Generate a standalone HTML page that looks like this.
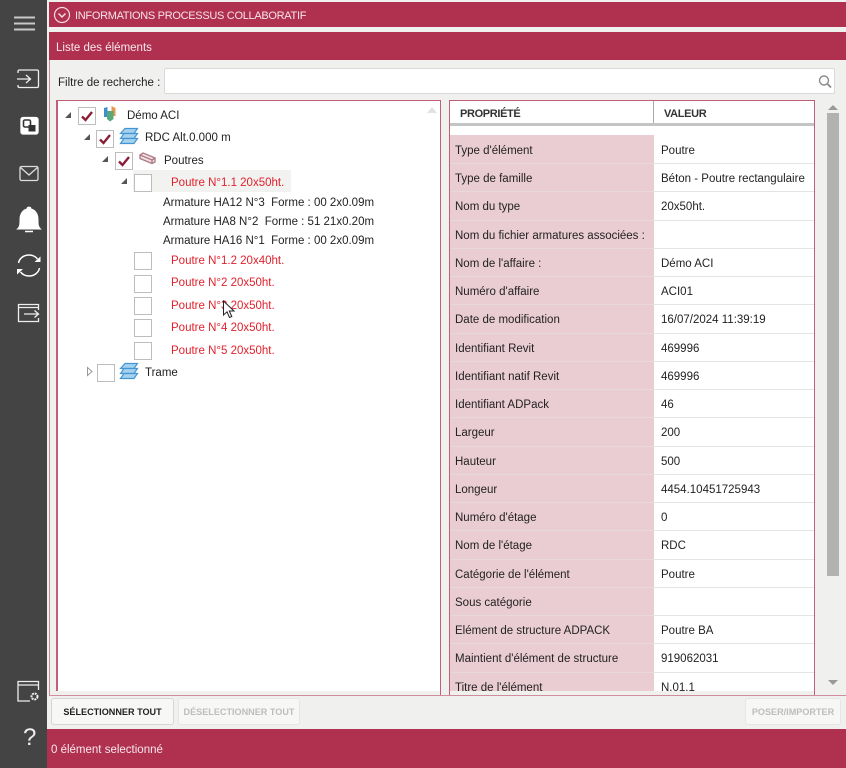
<!DOCTYPE html>
<html><head><meta charset="utf-8">
<style>
*{box-sizing:border-box}
html,body{margin:0;padding:0}
body{width:846px;height:768px;position:relative;overflow:hidden;background:#f0f0ee;font-family:"Liberation Sans",sans-serif;font-size:11.5px;color:#222}
.a{position:absolute}
.t{position:absolute;white-space:nowrap;line-height:16px;height:16px}
.cb{position:absolute;width:18px;height:18px;background:#fff;border:1px solid #bdbdbd}
.r{color:#e2212c}
.exp{position:absolute;width:0;height:0;border-left:6px solid transparent;border-bottom:6px solid #555}
.row{position:absolute;left:450px;width:364px;height:30px;background:#fff;border-top:1px solid #e4e4e4}
.row .p{position:absolute;left:0;top:-1px;width:204px;height:31px;background:#eaccd3;border-top:1px solid #e6d8db;padding:7px 0 0 5px;white-space:nowrap;line-height:16px}
.row .v{position:absolute;left:211px;top:7px;white-space:nowrap;line-height:16px}
.first,.first .p{border-top-color:transparent}
.btn{position:absolute;top:698px;height:27px;border-radius:3px;font-size:9.1px;font-weight:bold;text-align:center;line-height:27px;white-space:nowrap}
svg{position:absolute;overflow:visible}
</style></head><body>

<div class="a" style="left:0;top:0;width:47px;height:768px;background:#444"></div>

<!-- sidebar icons -->
<svg style="left:0;top:0" width="47" height="768" fill="none" stroke="#eee" stroke-width="1.3">
<path d="M14 17.500H35M14 23.500H35M14 29.500H35" stroke="#c8c8c8" stroke-width="2"/>
<path d="M18 73V71.500Q18 70 19.500 70H37Q38.500 70 38.500 71.500V86Q38.500 87.500 37 87.500H19.500Q18 87.500 18 86V85M17 79H30M26 75l4.500 4-4.500 4"/>
<rect x="21" y="117.500" width="17" height="16.500" rx="2" fill="#fff" stroke="#fff"/>
<rect x="23.500" y="120" width="7" height="7" rx="1.500" fill="none" stroke="#333" stroke-width="1.600"/>
<rect x="28.500" y="125" width="7" height="6.500" fill="#333" stroke="none"/>
<rect x="20" y="166.500" width="18" height="14" rx="1.500" stroke="#ddd"/>
<path d="M20.500 167.500L29 175L37.500 167.500" stroke="#ddd"/>
<path d="M17.500 229c2.500-2 2.500-5 2.500-9.500c0-6 3-9.500 7-10.500c0-2.500 4-2.500 4 0c4 1 7 4.500 7 10.500c0 4.500 0 7.500 2.500 9.500z" fill="#fff" stroke="#fff" stroke-width="1"/>
<path d="M25 231.500h8" stroke="#fff" stroke-width="1.500"/>
<path d="M18.500 263c1-5 5.500-8 10.500-8c3.500 0 6.500 1.500 8.500 4M39.500 268c-1 5-5.500 8-10.500 8c-3.500 0-6.500-1.500-8.500-4" stroke="#fff" stroke-width="1.500"/>
<path d="M40.500 256.500v5.500h-6zM17 274.500V269h6z" fill="#fff" stroke="none"/>
<path d="M38.500 310V304.500H18.500V321.500H38.500V318M18.500 307.500H38.500M24 314H38M34.500 310.500L38.500 314L34.500 317.500" stroke-width="1.300"/>
<path d="M18 683.500V681.500H38.500V690M18 683.500V701H30M18 685H38.500" stroke-width="1.300"/>
<circle cx="34.500" cy="696.500" r="3" stroke-width="2" stroke-dasharray="2 .8"/>
</svg>
<div class="t" style="left:23px;top:724px;width:20px;height:28px;font-size:24px;line-height:28px;color:#eee">?</div>

<!-- top bar -->
<div class="a" style="left:49px;top:2px;width:797px;height:25px;background:#b0304f"></div>
<svg style="left:0;top:0" width="80" height="30" fill="none" stroke="#f4dde3" stroke-width="1.200"><circle cx="62" cy="15" r="7.500"/><path d="M58.500 13.500L62 17L65.500 13.500" stroke-width="1.500"/></svg>
<div class="t" style="left:75px;top:8px;color:#f6e4e9;font-size:11px;letter-spacing:-.3px">INFORMATIONS PROCESSUS COLLABORATIF</div>

<!-- outer panel lines -->
<div class="a" style="left:49px;top:60px;width:1px;height:636px;background:#c98898"></div>
<div class="a" style="left:49px;top:695px;width:797px;height:1px;background:#cf8d9e"></div>

<!-- list header -->
<div class="a" style="left:49px;top:32px;width:797px;height:28px;background:#b0304f"></div>
<div class="t" style="left:56px;top:40px;color:#f8e8ec">Liste des éléments</div>

<div class="t" style="left:58px;top:75px;color:#222">Filtre de recherche :</div>
<div class="a" style="left:164px;top:68px;width:671px;height:26px;background:#fff;border:1px solid #d9d9d9;border-radius:2px"></div>
<svg style="left:817px;top:74px" width="15" height="15" fill="none" stroke="#8c8c8c" stroke-width="1.400"><circle cx="7" cy="6.500" r="4.500"/><path d="M10.500 10L14 13.500" stroke-width="1.800"/></svg>

<!-- tree panel -->
<div class="a" style="left:56px;top:100px;width:385px;height:591px;background:#fff;border:1px solid #bf5f78;border-left-width:2px;border-bottom:0"></div>
<div class="a" style="left:440px;top:691px;width:1px;height:4px;background:#bf5f78"></div>
<div class="exp" style="left:65px;top:112px"></div>
<div class="cb" style="left:78px;top:107px"></div>
<svg style="left:78px;top:107px" width="18" height="18" fill="none" stroke="#8a1e37" stroke-width="2.400"><path d="M4 9.500L7.500 13L14 5"/></svg>
<svg style="left:104px;top:106px" width="12" height="16"><path d="M0 2L3.500 1V11H0z" fill="#3f8fce"/><path d="M7.500 0L11.500 2V10H7.500z" fill="#e39a4f"/><path d="M3 5h6.500v8L6 15.500L3 13z" fill="#58a87a"/></svg>
<div class="t" style="left:127px;top:108px">Démo ACI</div>

<div class="exp" style="left:84px;top:134px"></div>
<div class="cb" style="left:96px;top:130px"></div>
<svg style="left:96px;top:130px" width="18" height="18" fill="none" stroke="#8a1e37" stroke-width="2.400"><path d="M4 9.500L7.500 13L14 5"/></svg>
<svg style="left:119px;top:127px" width="20" height="18" fill="#a5d2ee" stroke="#4495d2" stroke-width="1.200"><path d="M6 1.500H18.500L15 6.500H1.500z"/><path d="M5 6.500H18.500L15 11.500H1.500z"/><path d="M5 11.500H18.500L15 16.500H1.500z"/></svg>
<div class="t" style="left:145px;top:130px">RDC Alt.0.000 m</div>

<div class="exp" style="left:102px;top:156px"></div>
<div class="cb" style="left:115px;top:152px"></div>
<svg style="left:115px;top:152px" width="18" height="18" fill="none" stroke="#8a1e37" stroke-width="2.400"><path d="M4 9.500L7.500 13L14 5"/></svg>
<svg style="left:139px;top:152px" width="17" height="13" stroke="#ad7c88" stroke-width="1.400"><path d="M1 3L4 1L16 6V10L13 11.500L1 6.500z" fill="#f3e4e6"/><path d="M1 3L13 8V11.500M13 8L16 6" fill="none"/></svg>
<div class="t" style="left:164px;top:153px">Poutres</div>

<div class="a" style="left:133px;top:170px;width:158px;height:22px;background:#f2f2f0"></div>
<div class="exp" style="left:121px;top:178px"></div>
<div class="cb" style="left:134px;top:174px"></div>
<div class="t r" style="left:171px;top:175px">Poutre N°1.1 20x50ht.</div>

<div class="t" style="left:163px;top:195px">Armature HA12 N°3&nbsp; Forme : 00 2x0.09m</div>
<div class="t" style="left:163px;top:214px">Armature HA8 N°2&nbsp; Forme : 51 21x0.20m</div>
<div class="t" style="left:163px;top:233px">Armature HA16 N°1&nbsp; Forme : 00 2x0.09m</div>

<div class="cb" style="left:134px;top:252px"></div>
<div class="t r" style="left:171px;top:253px">Poutre N°1.2 20x40ht.</div>
<div class="cb" style="left:134px;top:275px"></div>
<div class="t r" style="left:171px;top:275px">Poutre N°2 20x50ht.</div>
<div class="cb" style="left:134px;top:297px"></div>
<div class="t r" style="left:171px;top:298px">Poutre N°3 20x50ht.</div>
<div class="cb" style="left:134px;top:319px"></div>
<div class="t r" style="left:171px;top:320px">Poutre N°4 20x50ht.</div>
<div class="cb" style="left:134px;top:342px"></div>
<div class="t r" style="left:171px;top:343px">Poutre N°5 20x50ht.</div>

<svg style="left:222px;top:300px" width="14" height="20" fill="#fff" stroke="#222" stroke-width="1"><path d="M1.500 1V15L5 11.800L7.500 17.500L9.800 16.500L7.300 11H12z"/></svg>

<svg style="left:86px;top:366px" width="8" height="11" fill="#fff" stroke="#999"><path d="M1.500 1.500L6 5.500L1.500 9.500z"/></svg>
<div class="cb" style="left:97px;top:364px"></div>
<svg style="left:119px;top:362px" width="20" height="18" fill="#a5d2ee" stroke="#4495d2" stroke-width="1.200"><path d="M6 1.500H18.500L15 6.500H1.500z"/><path d="M5 6.500H18.500L15 11.500H1.500z"/><path d="M5 11.500H18.500L15 16.500H1.500z"/></svg>
<div class="t" style="left:145px;top:365px">Trame</div>

<svg style="left:426px;top:106px" width="12" height="8"><path d="M1 7L6 1L11 7z" fill="#e2e2e2"/></svg>

<!-- property grid -->
<div class="a" style="left:449px;top:100px;width:366px;height:591px;background:#fff;border:1px solid #bf5f78;border-bottom:0"></div>
<div class="a" style="left:449px;top:691px;width:1px;height:4px;background:#bf5f78"></div>
<div class="a" style="left:814px;top:691px;width:1px;height:4px;background:#bf5f78"></div>
<div class="a" style="left:450px;top:101px;width:364px;height:22px;background:#fff"></div>
<div class="a" style="left:450px;top:123px;width:364px;height:3px;background:#c4c4c4"></div>
<div class="a" style="left:653px;top:101px;width:1px;height:22px;background:#aaa"></div>
<div class="t" style="left:460px;top:106px;font-weight:bold;font-size:11px;letter-spacing:-.35px;color:#333">PROPRIÉTÉ</div>
<div class="t" style="left:664px;top:106px;font-weight:bold;font-size:11px;letter-spacing:-.35px;color:#333">VALEUR</div>

<div class="a" style="left:450px;top:126px;width:364px;height:565px;overflow:hidden">
<div style="position:absolute;left:-450px;top:-126px;width:846px;height:768px">
<div class="row first" style="top:135px"><div class="p">Type d'élément</div><div class="v">Poutre</div></div>
<div class="row" style="top:163px"><div class="p">Type de famille</div><div class="v">Béton - Poutre rectangulaire</div></div>
<div class="row" style="top:191px"><div class="p">Nom du type</div><div class="v">20x50ht.</div></div>
<div class="row" style="top:220px"><div class="p">Nom du fichier armatures associées :</div><div class="v"></div></div>
<div class="row" style="top:248px"><div class="p">Nom de l'affaire :</div><div class="v">Démo ACI</div></div>
<div class="row" style="top:276px"><div class="p">Numéro d'affaire</div><div class="v">ACI01</div></div>
<div class="row" style="top:304px"><div class="p">Date de modification</div><div class="v">16/07/2024 11:39:19</div></div>
<div class="row" style="top:333px"><div class="p">Identifiant Revit</div><div class="v">469996</div></div>
<div class="row" style="top:361px"><div class="p">Identifiant natif Revit</div><div class="v">469996</div></div>
<div class="row" style="top:389px"><div class="p">Identifiant ADPack</div><div class="v">46</div></div>
<div class="row" style="top:417px"><div class="p">Largeur</div><div class="v">200</div></div>
<div class="row" style="top:446px"><div class="p">Hauteur</div><div class="v">500</div></div>
<div class="row" style="top:474px"><div class="p">Longeur</div><div class="v">4454.10451725943</div></div>
<div class="row" style="top:502px"><div class="p">Numéro d'étage</div><div class="v">0</div></div>
<div class="row" style="top:530px"><div class="p">Nom de l'étage</div><div class="v">RDC</div></div>
<div class="row" style="top:559px"><div class="p">Catégorie de l'élément</div><div class="v">Poutre</div></div>
<div class="row" style="top:587px"><div class="p">Sous catégorie</div><div class="v"></div></div>
<div class="row" style="top:615px"><div class="p">Elément de structure ADPACK</div><div class="v">Poutre BA</div></div>
<div class="row" style="top:643px"><div class="p">Maintient d'élément de structure</div><div class="v">919062031</div></div>
<div class="row" style="top:672px"><div class="p">Titre de l'élément</div><div class="v">N.01.1</div></div>
</div></div>

<!-- scrollbar -->
<svg style="left:827px;top:103px" width="12" height="8"><path d="M1 7L6 2L11 7z" fill="#9a9a9a"/></svg>
<div class="a" style="left:827px;top:113px;width:12px;height:463px;background:#b2b2b0"></div>
<svg style="left:827px;top:679px" width="12" height="8"><path d="M1 1L6 6L11 1z" fill="#9a9a9a"/></svg>

<!-- buttons -->
<div class="btn" style="left:51px;width:123px;background:#f7f7f6;border:1px solid #d4d6da;color:#222">SÉLECTIONNER TOUT</div>
<div class="btn" style="left:178px;width:122px;background:#f7f7f6;border:1px solid #e6e6e4;color:#bdbdbd">DÉSELECTIONNER TOUT</div>
<div class="btn" style="left:745px;width:96px;background:#f7f7f6;border:1px solid #e6e6e4;color:#bdbdbd">POSER/IMPORTER</div>

<!-- status bar -->
<div class="a" style="left:47px;top:729px;width:799px;height:39px;background:#b0304f"></div>
<div class="t" style="left:51px;top:742px;color:#f8e8ec">0 élément selectionné</div>

</body></html>
